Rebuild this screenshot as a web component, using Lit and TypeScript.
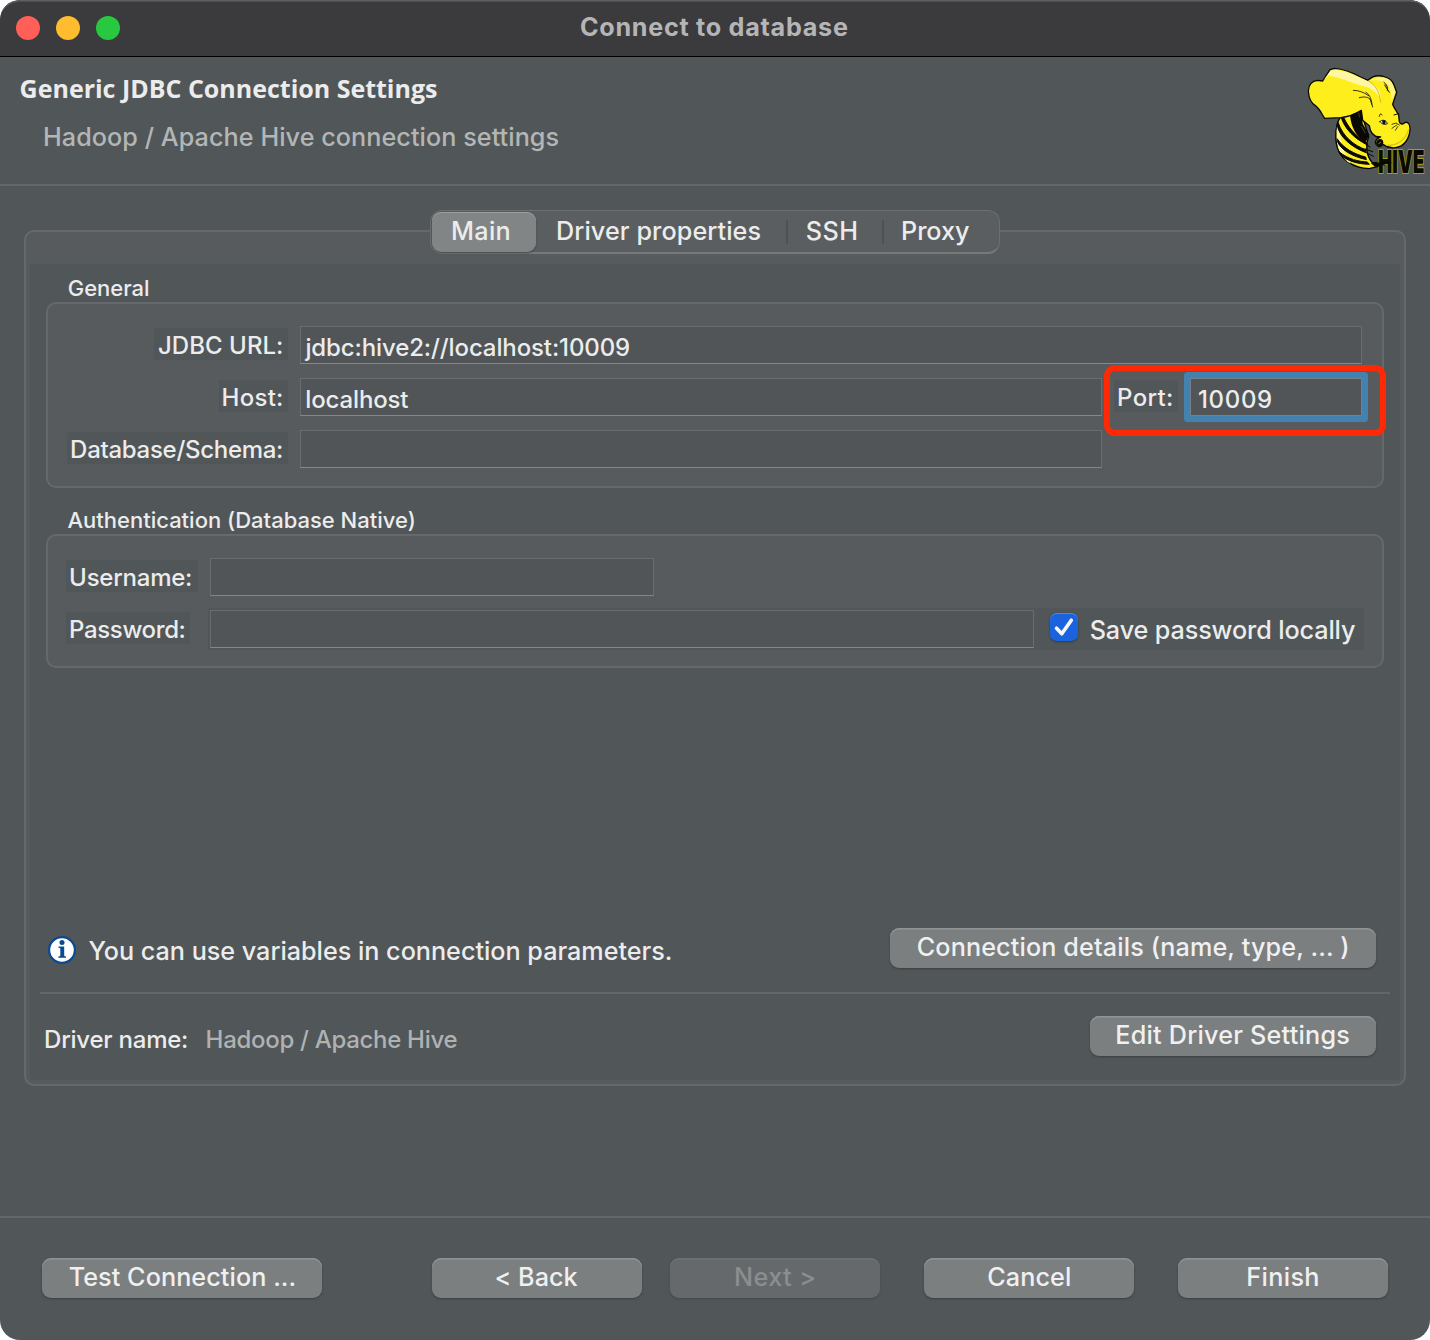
import { LitElement, html, css, svg } from "lit";
import { customElement, property } from "lit/decorators.js";

/** Single line of text tracked so that its ink spans exactly `span` pixels. */
@customElement("tracked-text")
class TrackedText extends LitElement {
  @property({ type: Number }) span = 0;
  @property() text = "";

  static styles = css`
    :host {
      display: inline-block;
      flex: none;
      white-space: pre;
      font-variant-ligatures: none;
    }
    .run {
      display: block;
    }
  `;

  updated() {
    const cs = getComputedStyle(this);
    const ctx = document.createElement("canvas").getContext("2d")!;
    const font = (size: number) => `${cs.fontWeight} ${size}px ${cs.fontFamily}`;
    const size = parseFloat(cs.fontSize);
    ctx.font = font(size);
    const advance = ctx.measureText(this.text).width;
    // Side bearings are read at ten times the size, where rounding is negligible.
    ctx.font = font(size * 10);
    const big = ctx.measureText(this.text);
    const left = -big.actualBoundingBoxLeft / 10;
    const right = (big.width - big.actualBoundingBoxRight) / 10;
    const ink = advance - left - right;
    const run = this.renderRoot.querySelector<HTMLElement>(".run")!;
    this.style.width = `${this.span}px`;
    run.style.letterSpacing = `${(this.span - ink) / (this.text.length - 1)}px`;
    run.style.marginLeft = `${-left}px`;
  }

  render() {
    return html`<span class="run">${this.text}</span>`;
  }
}

const t = (text: string, span: number) =>
  html`<tracked-text .text=${text} .span=${span}></tracked-text>`;

const hiveLogo = svg`
  <g stroke-linejoin="round" stroke-linecap="round">
    <path d="M152 186 C136 205 134 250 142 278 C156 315 190 338 238 341 L290 327 L246 322 C228 300 226 270 236 244 L212 168 Z" fill="#fdee1c" stroke="#000" stroke-width="4"/>
    <path d="M141 210 C139 235 140 262 147 284 C156 304 168 318 182 326 C166 302 150 262 150 226 Z" fill="#fff6a0"/>
    <path d="M153 186 C164 222 192 250 232 270 L229 262 C200 246 172 216 160 184 Z M142 212 C148 246 184 276 228 293 L228 284 C192 272 158 244 145 204 Z M142 258 C150 284 186 304 229 314 L227 306 C194 298 160 280 142 252 Z M152 300 C172 318 202 327 238 328 L232 321 C206 319 176 314 147 290 Z" fill="#080804" stroke="#080804" stroke-width="3"/>
    <path d="M180 180 L216 164 L218 206 L238 240 L227 262 C200 246 184 220 180 180 Z" fill="#080804"/>
    <path d="M206 172 L208 186 M214 214 L226 234" stroke="#4a4612" stroke-width="3" fill="none"/>
    <path d="M234 76 C246 64 264 60 280 64 C296 68 308 76 312 90 L320 112 L308 148 C312 160 320 168 326 180 L328 200 C330 208 338 210 346 202 C354 200 360 208 360 220 C360 250 342 276 316 278 C300 280 290 276 278 268 C270 280 258 274 256 262 C258 254 262 250 268 248 C250 244 240 230 238 212 L218 196 L214 166 C198 176 170 186 152 188 L104 190 C94 176 90 162 76 152 C64 144 56 128 55 108 C56 90 64 78 82 76 L98 78 L120 44 L134 40 C160 42 190 54 212 66 Z" fill="#fdee1c" stroke="#0a0a04" stroke-width="4"/>
    <path d="M102 74 L122 47 L136 44 C164 47 190 58 214 70 C242 82 262 94 270 112 L272 132 C260 112 244 100 222 94 C190 86 150 66 116 62 Z" fill="#fff7a6"/>
    <path d="M240 76 C256 66 280 66 294 72 C306 80 310 92 316 110 L304 138 C306 116 300 90 284 82 C268 74 254 78 240 76 Z" fill="#fff48a"/>
    <path d="M236 78 C256 90 268 108 272 142" fill="none" stroke="#c9b60e" stroke-width="2.5"/>
    <path d="M190 106 C206 106 222 112 236 122 M208 128 C224 124 232 126 240 132 L248 156 M228 112 C240 120 244 132 246 148" fill="none" stroke="#111" stroke-width="2.5"/>
    <path d="M282 82 C290 88 294 96 292 106 M284 90 L298 112" fill="none" stroke="#1c1a08" stroke-width="3"/>
    <path d="M268 184 C270 176 272 174 276 180 M312 180 L326 176" fill="none" stroke="#111" stroke-width="3"/>
    <path d="M270 200 C276 193 288 194 292 206 C284 210 276 208 270 200 Z" fill="#fff" stroke="#111" stroke-width="3"/>
    <path d="M276 196 L287 197 L286 208 L278 207 Z" fill="#111"/>
    <path d="M306 208 L318 204 L328 210 M306 220 L320 210 M316 226 L324 214" fill="none" stroke="#222008" stroke-width="2.5"/>
    <path d="M258 244 L272 246 M260 264 C264 252 276 250 278 262 C278 272 266 280 260 264 Z" fill="#0a0a04" stroke="#0a0a04" stroke-width="4"/>
    <path d="M266 266 L272 262" stroke="#8f8618" stroke-width="3"/>
    <path d="M290 271 C318 274 346 256 355 226" fill="none" stroke="#d9c60f" stroke-width="4"/>
    <path d="M228 268 L240 276 M226 282 L248 290 M230 294 L250 304" stroke="#080804" stroke-width="3" fill="none"/>
  </g>
  <text x="264" y="355" textLength="139" lengthAdjust="spacingAndGlyphs" font-family="Inter, sans-serif" font-weight="900" font-size="92" fill="#0a0a00" stroke="#a89f10" stroke-width="6" paint-order="stroke">HIVE</text>
  <path d="M242 325 L308 321 L258 337 Z" fill="#080804"/>`;

@customElement("app-root")
class AppRoot extends LitElement {
  static styles = css`
    :host {
      display: block;
      background: #fff;
      font-family: Inter, "Liberation Sans", sans-serif;
      font-size: 24px;
      font-weight: 450;
      color: #ececec;
    }
    * {
      box-sizing: border-box;
    }
    .window {
      display: flex;
      flex-direction: column;
      height: 1340px;
      width: 1430px;
      border-radius: 20px;
      overflow: hidden;
      background: #515658;
    }
    .titlebar {
      display: flex;
      align-items: center;
      height: 57px;
      flex: none;
      padding: 0 16px;
      background: #3b3a3c;
      border-bottom: 1px solid #000;
      box-shadow: inset 0 2px 0 -0.5px #5f6061;
      border-radius: 20px 20px 0 0;
    }
    .lights {
      display: flex;
      gap: 16px;
      width: 565px;
    }
    .light {
      width: 24px;
      height: 24px;
      border-radius: 50%;
    }
    .red { background: #ff5f57; }
    .amber { background: #febc2e; }
    .green { background: #28c840; }
    .window-title {
      font-size: 25.2px;
      font-weight: 700;
      line-height: 30px;
      color: #b5b5b6;
      margin-bottom: 2px;
    }
    .header {
      display: flex;
      justify-content: space-between;
      height: 129px;
      flex: none;
      border-bottom: 2px solid #636867;
    }
    .headings {
      display: flex;
      flex-direction: column;
      padding: 15px 0 0 21px;
    }
    .heading {
      font-family: "Open Sans", sans-serif;
      font-weight: 700;
      font-size: 25px;
      line-height: 32px;
    }
    .subheading {
      font-size: 25.2px;
      line-height: 32px;
      margin: 17px 0 0 24px;
      color: #b4b6b6;
    }
    .logo {
      width: 140px;
      height: 127px;
      overflow: visible;
    }
    .folder {
      display: flex;
      flex-direction: column;
      align-items: stretch;
      height: 856px;
      margin: 44px 24px 0;
      padding: 0 4px 4px;
      border: 2px solid #65696b;
      border-radius: 10px;
      background: #575b5d;
    }
    .tabs {
      display: flex;
      align-self: center;
      align-items: center;
      width: 570px;
      height: 44px;
      flex: none;
      margin: -22px 0 10px;
      border: 1px solid #6b6f71;
      border-bottom: 2px solid #75797a;
      border-radius: 12px;
      background: #5a5e60;
      font-size: 25.2px;
      line-height: 32px;
    }
    .tab {
      display: flex;
      align-items: center;
      height: 40px;
      padding: 0 0 2px 20px;
    }
    .tab.selected {
      width: 104px;
      padding-left: 21px;
      margin: 0 0 0 1px;
      border-radius: 9px;
      background: #828586;
      box-shadow: inset 0 1px 0 #9a9d9e, 0 1px 2px #404446;
    }
    .tab.properties { width: 250px; padding-left: 22px; }
    .tab.short { width: 94px; padding-left: 19px; }
    .divider {
      width: 2px;
      height: 24px;
      background: #4d5152;
    }
    .pane {
      display: flex;
      flex-direction: column;
      flex: 1;
      padding: 11px 16px 24px;
      background: #515658;
    }
    .caption {
      font-size: 22px;
      line-height: 26px;
      height: 27px;
      padding-left: 23px;
    }
    .group {
      display: flex;
      flex-direction: column;
      gap: 14px;
      padding: 22px 20px 18px 18px;
      border: 2px solid #65696b;
      border-radius: 10px;
      background: #575b5d;
    }
    .group.auth { padding-right: 18px; }
    .auth-caption { margin-top: 19px; padding-left: 22px; }
    .row {
      display: flex;
      height: 38px;
      position: relative;
    }
    .label {
      display: flex;
      justify-content: flex-end;
      height: 32px;
      margin: 2px 12px 0 0;
      padding: 3px 6.5px 0 5px;
      line-height: 29px;
      background: #515658;
    }
    .push { margin-left: auto; }
    .labelcell {
      display: flex;
      width: 234px;
      flex: none;
    }
    .field {
      height: 38px;
      padding: 4px 0 0 5px;
      line-height: 33px;
      border: 1px solid #696d6f;
      border-bottom: 1.5px solid #858889;
      background: #515557;
    }
    .field.url { flex: 1; padding-left: 4px; }
    .field.host { width: 802px; padding-left: 6px; }
    .field.user { width: 444px; }
    .field.pass { width: 824px; }
    .field.focused {
      width: 172px;
      padding-left: 8px;
      border-color: #74808a;
      box-shadow: 0 0 0 6px #4381ae;
      border-radius: 1px;
    }
    .portlabel { margin-left: 12px; width: 64px; }
    .marker {
      position: absolute;
      left: 1038px;
      top: -13px;
      width: 282px;
      height: 71px;
      border: 6px solid #ff2a05;
      border-radius: 11px;
    }
    .userlabel { width: 132px; justify-content: flex-start; }
    .passlabel { width: 124px; justify-content: flex-start; margin-right: 18px; }
    .passline {
      display: flex;
      flex: 1;
      height: 42px;
      margin-top: -2px;
      padding: 2px 0 2px 2px;
      background: #515658;
    }
    .check {
      width: 28px;
      height: 28px;
      margin: 3px 13px 0 16px;
      border-radius: 7px;
      background: #1b63de;
      box-shadow: inset 0 1px 0 #4c86e8, 0 1px 2px #33383b;
    }
    .checktext {
      font-size: 25.2px;
      line-height: 40px;
    }
    .spacer { flex: 1; }
    .inforow {
      display: flex;
      align-items: center;
      height: 40px;
      padding: 0 8px 0 2px;
    }
    .info {
      width: 28px;
      height: 28px;
      margin: 4px 13px 0 0;
    }
    .infotext {
      font-size: 25.2px;
      line-height: 32px;
      margin-top: 5px;
    }
    .rule {
      height: 2px;
      margin: 24px -6px 22px -6px;
      background: #636867;
    }
    .driverrow {
      display: flex;
      align-items: center;
      height: 40px;
      padding: 0 8px 0 0;
    }
    .drivertext {
      display: flex;
      gap: 21px;
      line-height: 30px;
      padding-top: 7px;
    }
    .dim { color: #b0b2b2; }
    .button {
      display: flex;
      align-items: center;
      justify-content: center;
      height: 40px;
      padding: 0 0 3px;
      font: inherit;
      font-size: 25.2px;
      line-height: 32px;
      color: #f0f0f0;
      border: 0;
      border-radius: 9px;
      background: #7c7f80;
      box-shadow: inset 0 1.5px 0 #919495, 0 1px 2px #3b3f41;
    }
    .details { width: 486px; margin-left: auto; }
    .edit { width: 286px; margin-left: auto; }
    .footer {
      display: flex;
      margin-top: 130px;
      padding: 40px 42px 0;
      border-top: 2px solid #636867;
    }
    .test { width: 280px; margin-right: 110px; }
    .nav { width: 210px; }
    .back { margin-right: 28px; }
    .next {
      margin-right: 44px;
      color: #8b8e8f;
      background: #66696b;
      box-shadow: inset 0 1.5px 0 #6f7273, 0 1px 2px #45494b;
    }
    .cancel { margin-right: 44px; }
  `;

  render() {
    return html`
      <div class="window">
        <div class="titlebar">
          <div class="lights">
            <span class="light red"></span>
            <span class="light amber"></span>
            <span class="light green"></span>
          </div>
          <div class="window-title">${t("Connect to database", 266)}</div>
        </div>

        <div class="header">
          <div class="headings">
            <div class="heading">${t("Generic JDBC Connection Settings", 415.5)}</div>
            <div class="subheading">${t("Hadoop / Apache Hive connection settings", 513)}</div>
          </div>
          <svg class="logo" viewBox="0 6 420 381">${hiveLogo}</svg>
        </div>

        <div class="folder">
          <div class="tabs">
            <div class="tab selected">${t("Main", 56)}</div>
            <div class="tab properties">${t("Driver properties", 202)}</div>
            <span class="divider"></span>
            <div class="tab short">${t("SSH", 49)}</div>
            <span class="divider"></span>
            <div class="tab short">${t("Proxy", 66)}</div>
          </div>
          <div class="pane">
            <div class="caption">${t("General", 79)}</div>
            <div class="group">
              <div class="row">
                <div class="labelcell"><div class="label push">${t("JDBC URL:", 122.5)}</div></div>
                <div class="field url">${t("jdbc:hive2://localhost:10009", 324)}</div>
              </div>
              <div class="row">
                <div class="labelcell"><div class="label push">${t("Host:", 58)}</div></div>
                <div class="field host">${t("localhost", 101)}</div>
                <div class="label portlabel">${t("Port:", 52.5)}</div>
                <div class="field focused">${t("10009", 72)}</div>
                <div class="marker"></div>
              </div>
              <div class="row">
                <div class="labelcell"><div class="label push">${t("Database/Schema:", 209.5)}</div></div>
                <div class="field host"></div>
              </div>
            </div>
            <div class="caption auth-caption">${t("Authentication (Database Native)", 345.5)}</div>
            <div class="group auth">
              <div class="row">
                <div class="label userlabel">${t("Username:", 119.5)}</div>
                <div class="field user"></div>
              </div>
              <div class="row">
                <div class="label passlabel">${t("Password:", 113)}</div>
                <div class="passline">
                  <div class="field pass"></div>
                  <svg class="check" viewBox="0 0 28 28">
                    <path d="M6.5 15.2 L11.8 20.8 L21.3 7.2" fill="none" stroke="#f2f6fd" stroke-width="3.6" stroke-linecap="round" stroke-linejoin="round"/>
                  </svg>
                  <div class="checktext">${t("Save password locally", 264)}</div>
                </div>
              </div>
            </div>
            <div class="spacer"></div>
            <div class="inforow">
              <svg class="info" viewBox="0 0 28 28">
                <circle cx="14" cy="14" r="12.9" fill="#fff" stroke="#0b4a92" stroke-width="2.2"/>
                <circle cx="14" cy="6.6" r="2.5" fill="#0b4a92"/>
                <path d="M10.5 10.6 H16.2 V19.6 Q16.2 20.4 18 20.6 V21.8 H10.3 V20.6 Q12.3 20.4 12.3 19.6 V12.8 Q12.3 11.9 10.5 11.8 Z" fill="#0b4a92"/>
              </svg>
              <div class="infotext">${t("You can use variables in connection parameters.", 581.5)}</div>
              <button class="button details">${t("Connection details (name, type, ... )", 430)}</button>
            </div>
            <div class="rule"></div>
            <div class="driverrow">
              <div class="drivertext">
                ${t("Driver name:", 140.5)}
                <span class="dim">${t("Hadoop / Apache Hive", 249)}</span>
              </div>
              <button class="button edit">${t("Edit Driver Settings", 231.5)}</button>
            </div>
          </div>
        </div>

        <div class="footer">
          <button class="button test">${t("Test Connection ...", 224.5)}</button>
          <button class="button nav back">${t("< Back", 81)}</button>
          <button class="button nav next" disabled>${t("Next >", 78)}</button>
          <button class="button nav cancel">${t("Cancel", 81)}</button>
          <button class="button nav">${t("Finish", 69.5)}</button>
        </div>
      </div>
    `;
  }
}
